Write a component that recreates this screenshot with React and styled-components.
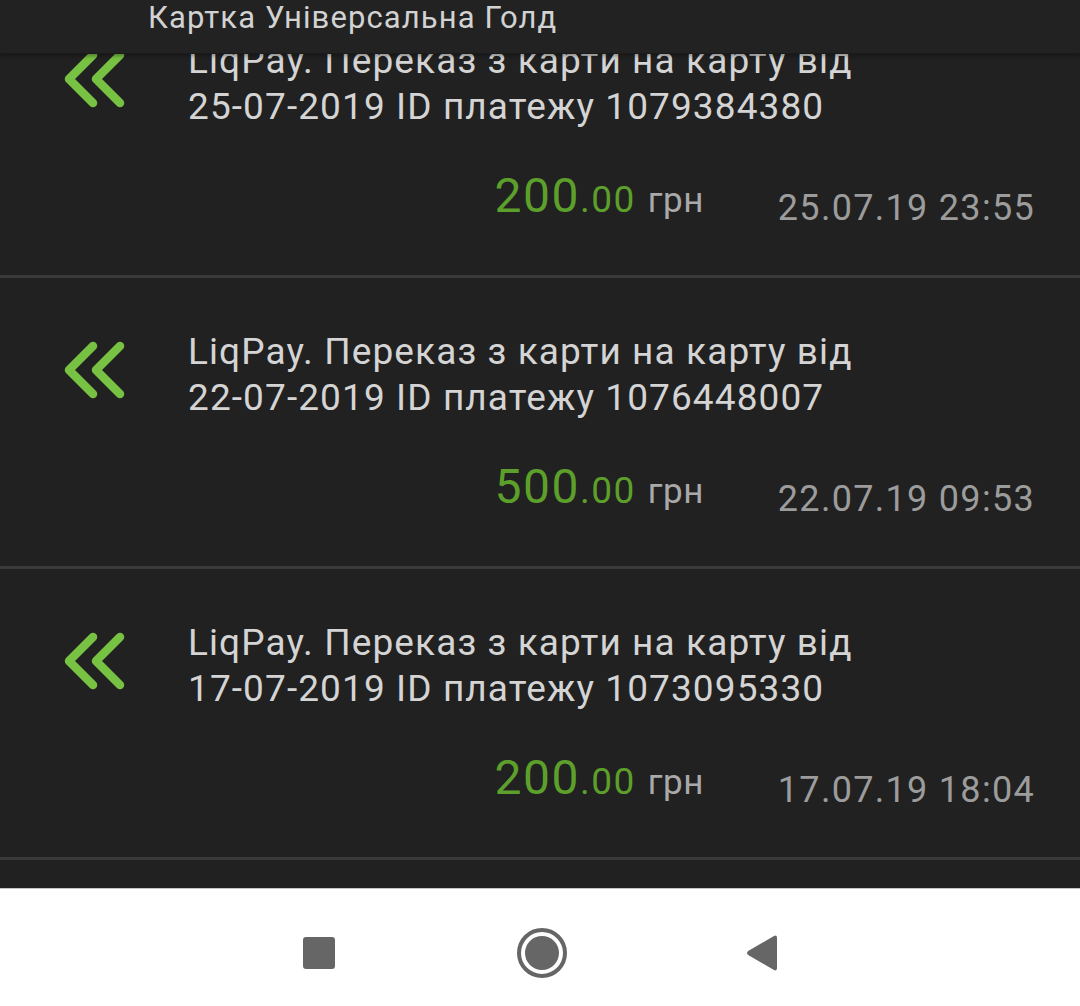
import React from 'react';
import styled, { createGlobalStyle } from 'styled-components';

const GlobalStyle = createGlobalStyle`
  html, body {
    margin: 0;
    padding: 0;
    background: #212121;
  }
  body {
    font-family: Roboto, "Noto Sans", "Liberation Sans", sans-serif;
  }
  * {
    box-sizing: border-box;
  }
`;

const Screen = styled.div`
  width: 1080px;
  height: 1006px;
  display: flex;
  flex-direction: column;
  overflow: hidden;
  background: #212121;
`;

const Header = styled.header`
  position: relative;
  z-index: 2;
  height: 54px;
  flex-shrink: 0;
  background: #222222;
  border-bottom: 1px solid #1b1b1b;
  box-shadow: 0 2px 4px rgba(0, 0, 0, 0.35);
  padding-left: 148px;
`;

const HeaderTitle = styled.div`
  font-size: 31px;
  line-height: 36px;
  letter-spacing: 1.1px;
  color: #d2d2d2;
  white-space: nowrap;
`;

const Viewport = styled.main`
  flex: 1;
  overflow: hidden;
`;

const List = styled.div`
  margin-top: ${props => -props.scroll}px;
`;

const Row = styled.div`
  height: 291px;
  border-bottom: 3px solid #3a3a3a;
  display: grid;
  grid-template-columns: 64px 1fr;
  column-gap: 62px;
  padding: 51px 45px 0 62px;
  align-content: start;
`;

const Icon = styled.svg`
  width: 64px;
  height: 60px;
  margin-top: 11px;
`;

const Body = styled.div`
  display: flex;
  flex-direction: column;
`;

const Title = styled.div`
  font-size: 37px;
  line-height: 46px;
  letter-spacing: 1.1px;
  color: #d4d4d4;
  white-space: nowrap;
`;

const Meta = styled.div`
  display: flex;
  justify-content: flex-end;
  align-items: flex-start;
  gap: 74px;
  margin-top: 40px;
`;

const Amount = styled.div`
  line-height: 52px;
  white-space: nowrap;
`;

const Whole = styled.span`
  font-size: 48px;
  letter-spacing: 1.5px;
  color: #5c9f2b;
`;

const Cents = styled.span`
  font-size: 37px;
  letter-spacing: 1.5px;
  color: #5c9f2b;
`;

const Currency = styled.span`
  font-size: 35px;
  letter-spacing: 0.5px;
  color: #a9a9a9;
  margin-left: 12px;
`;

const Stamp = styled.div`
  font-size: 36px;
  line-height: 52px;
  letter-spacing: 1.3px;
  padding-top: 12px;
  color: #9c9c9c;
  white-space: nowrap;
`;

const NavBar = styled.nav`
  height: 118px;
  flex-shrink: 0;
  background: #ffffff;
  border-top: 1px solid #c4c4c4;
  display: flex;
  align-items: center;
  justify-content: center;
  gap: 182px;
  padding: 10px 0 0 2px;
`;

const RecentsKey = styled.div`
  width: 32px;
  height: 32px;
  border-radius: 3px;
  background: #666666;
`;

const HomeKey = styled.div`
  width: 50px;
  height: 50px;
  border-radius: 50%;
  border: 4px solid #666666;
  display: flex;
  align-items: center;
  justify-content: center;
  &::after {
    content: '';
    width: 34px;
    height: 34px;
    border-radius: 50%;
    background: #666666;
  }
`;

const BackKey = styled.svg`
  width: 34px;
  height: 38px;
  margin-left: -4px;
`;

const IncomeIcon = () => (
  <Icon viewBox="0 0 64 60" fill="none" stroke="#78c243" strokeWidth="8.5" strokeLinecap="round" strokeLinejoin="round">
    <polyline points="31,6 7,30 31,54" />
    <polyline points="58,6 34,30 58,54" />
  </Icon>
);

const transfers = [
  { id: '1079384380', day: '25-07-2019', sum: '200', time: '25.07.19 23:55' },
  { id: '1076448007', day: '22-07-2019', sum: '500', time: '22.07.19 09:53' },
  { id: '1073095330', day: '17-07-2019', sum: '200', time: '17.07.19 18:04' },
  { id: '1070000000', day: '10-07-2019', sum: '100', time: '10.07.19 12:00' }
];

export default function App() {
  return (
    <>
      <GlobalStyle />
      <Screen>
        <Header>
          <HeaderTitle>Картка Універсальна Голд</HeaderTitle>
        </Header>
        <Viewport>
          <List scroll={67}>
            {transfers.map(t => (
              <Row key={t.id}>
                <IncomeIcon />
                <Body>
                  <Title>
                    LiqPay. Переказ з карти на карту від
                    <br />
                    {t.day} ID платежу {t.id}
                  </Title>
                  <Meta>
                    <Amount>
                      <Whole>{t.sum}</Whole>
                      <Cents>.00</Cents>
                      <Currency>грн</Currency>
                    </Amount>
                    <Stamp>{t.time}</Stamp>
                  </Meta>
                </Body>
              </Row>
            ))}
          </List>
        </Viewport>
        <NavBar>
          <RecentsKey />
          <HomeKey />
          <BackKey viewBox="0 0 34 38">
            <path d="M4 21.5 L29 36 Q32 37.5 32 34 L32 4 Q32 0.5 29 2 L4 16.5 Q0 19 4 21.5 Z" fill="#666666" />
          </BackKey>
        </NavBar>
      </Screen>
    </>
  );
}
